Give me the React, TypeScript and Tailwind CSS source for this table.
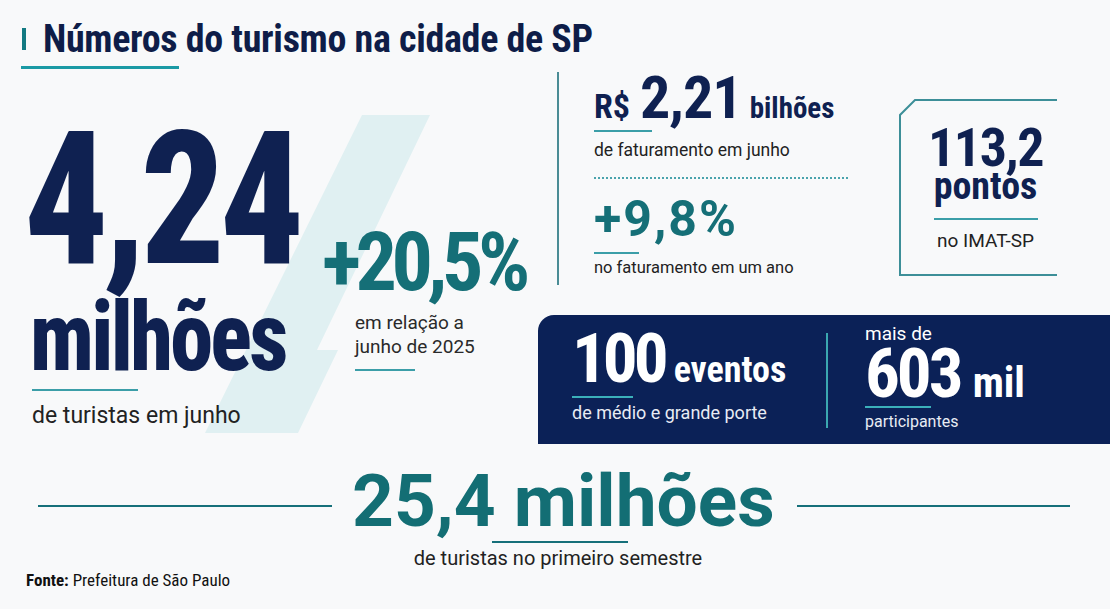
import React from 'react'

const cond = "font-['Roboto_Condensed','Liberation_Sans_Narrow',Roboto,sans-serif]"
const body = "font-['Roboto','Liberation_Sans',sans-serif] font-normal"

function Rule({ className }: { className: string }) {
  return <div className={`h-[2px] bg-[#3b9ea8] ${className}`} />
}

export default function App() {
  return (
    <div className={`relative w-[1110px] h-[609px] overflow-hidden bg-[#f8f9fa] ${cond} text-[#222]`}>
      {/* slash decoration behind the numbers */}
      <svg className="absolute left-0 top-0 z-0" width="1110" height="609" viewBox="0 0 1110 609">
        <polygon points="362,115 430,115 317,350 338,350 298,433 205,433" fill="#e0f0f2" />
      </svg>

      <div className="relative z-10">
        {/* header */}
        <header className="pt-[19px] pl-[22px]">
          <div className="flex items-center">
            <div className="w-[4px] h-[22px] bg-[#137a82]" />
            <h1 className="ml-[17px] text-[38px] leading-[40px] font-bold text-[#0e1d48] tracking-[-0.3px]">
              Números do turismo na cidade de SP
            </h1>
          </div>
          <div className="mt-[7px] ml-[-1px] w-[158px] h-[3px] bg-[#1a9aa5]" />
        </header>

        {/* main */}
        <div className="mt-[3px] flex">
          {/* left column */}
          <div className="w-[538px] flex">
            <div className="w-[322px] pl-[28px] pt-[53px]">
              <div className="-ml-[4px] origin-left scale-x-[0.9] text-[185px] leading-[150px] font-extrabold text-[#0f2151] tracking-[-6px] whitespace-nowrap">
                4,24
              </div>
              <div className="mt-[17px] ml-[2px] origin-left scale-x-[0.9] text-[96px] leading-[90px] font-extrabold text-[#0f2151] tracking-[-3px] whitespace-nowrap">
                milhões
              </div>
              <Rule className="mt-[7px] ml-[4px] w-[106px]" />
              <div className={`mt-[10px] ml-[4px] text-[23px] leading-[30px] ${body}`}>de turistas em junho</div>
            </div>
            <div className="pt-[155px]">
              <div className="text-[82px] leading-[70px] font-bold text-[#156f77] tracking-[-5.5px]">+20,5%</div>
              <div className={`pl-[33px] mt-[14px] text-[19px] leading-[24px] text-[#2a2a2a] ${body}`}>
                <div>em relação a</div>
                <div>junho de 2025</div>
                <Rule className="mt-[10px] w-[60px]" />
              </div>
            </div>
          </div>

          {/* right column */}
          <div className="flex-1">
            <div className="flex">
              <div className="ml-[19px] w-[2px] h-[213px] bg-[#4a8c95]" />
              <div className="ml-[35px] w-[305px] pt-[2px]">
                <div className="flex items-baseline h-[48px] font-bold text-[#0f2151]">
                  <span className="text-[34px] leading-[30px]">R$</span>
                  <span className="ml-[10px] text-[60px] leading-[48px] tracking-[-1px]">2,21</span>
                  <span className="ml-[8px] text-[29px] leading-[30px]">bilhões</span>
                </div>
                <Rule className="mt-[8px] w-[58px]" />
                <div className={`mt-[7px] text-[17.5px] leading-[22px] ${body}`}>de faturamento em junho</div>
                <div className="mt-[16px] w-[254px] border-t-2 border-dotted border-[#4aa3ac]" />
                <div className="mt-[15px] font-['Roboto',sans-serif] text-[50px] leading-[50px] font-bold text-[#156f77] tracking-[2px]">
                  +9,8%
                </div>
                <Rule className="mt-[8px] w-[45px]" />
                <div className={`mt-[3px] text-[16.5px] leading-[22px] ${body}`}>no faturamento em um ano</div>
              </div>

              {/* IMAT box */}
              <div className="relative mt-[27px] w-[158px] h-[177px] pl-[15px] pt-[27px] text-center">
                <svg className="absolute left-0 top-0" width="158" height="177" viewBox="0 0 158 177">
                  <path d="M158 1 H16 L1 16 V176 H158" fill="none" stroke="#3d8f98" strokeWidth="2" />
                </svg>
                <div className="relative text-[54px] leading-[44px] font-bold text-[#0f2151] tracking-[-1.5px]">113,2</div>
                <div className="relative mt-[1px] text-[38px] leading-[30px] font-bold text-[#0f2151]">pontos</div>
                <Rule className="relative mx-auto mt-[17px] w-[104px]" />
                <div className={`relative mt-[9px] text-[19px] leading-[24px] ${body}`}>no IMAT-SP</div>
              </div>
            </div>

            {/* events panel */}
            <div className="mt-[30px] h-[129px] rounded-tl-[16px] bg-[#0b2157] flex text-white">
              <div className="pl-[34px] pt-[16px] w-[288px]">
                <div className="flex items-baseline h-[56px] font-bold">
                  <span className="text-[69px] leading-[56px] tracking-[-4px]">100</span>
                  <span className="ml-[9px] text-[36px] leading-[30px]">eventos</span>
                </div>
                <Rule className="mt-[9px] w-[61px] bg-[#3bb0ba]" />
                <div className={`mt-[4px] text-[18px] leading-[22px] text-[#e8ecf4] ${body}`}>de médio e grande porte</div>
              </div>
              <div className="mt-[18px] w-[2px] h-[95px] bg-[#3ba7b0]" />
              <div className="ml-[37px] pt-[7px]">
                <div className={`text-[19px] leading-[24px] ${body}`}>mais de</div>
                <div className="flex items-baseline h-[56px] font-bold">
                  <span className="text-[69px] leading-[56px] tracking-[-3px]">603</span>
                  <span className="ml-[12px] text-[42px] leading-[30px]">mil</span>
                </div>
                <Rule className="mt-[4px] w-[66px] bg-[#3bb0ba]" />
                <div className={`mt-[3px] text-[16px] leading-[22px] text-[#e8ecf4] ${body}`}>participantes</div>
              </div>
            </div>
          </div>
        </div>

        {/* bottom */}
        <div className="mt-[22px]">
          <div className="flex items-start">
            <div className="ml-[38px] mt-[39px] w-[294px] h-[2px] bg-[#16707a]" />
            <div className="ml-[20px] font-['Roboto',sans-serif] text-[73px] leading-[70px] font-bold text-[#136e74]">
              25,4 milhões
            </div>
            <div className="ml-[22px] mt-[39px] w-[273px] h-[2px] bg-[#16707a]" />
          </div>
          <div className="mt-[5px] mx-auto w-[136px] h-[2px] bg-[#16707a] translate-x-[5px]" />
          <div className={`mt-[2px] text-center text-[20px] leading-[26px] text-[#222] translate-x-[3px] ${body}`}>
            de turistas no primeiro semestre
          </div>
          <div className="pl-[26px] text-[17px] leading-[18px] text-[#111]">
            <span className="font-bold">Fonte:</span> Prefeitura de São Paulo
          </div>
        </div>
      </div>
    </div>
  )
}
